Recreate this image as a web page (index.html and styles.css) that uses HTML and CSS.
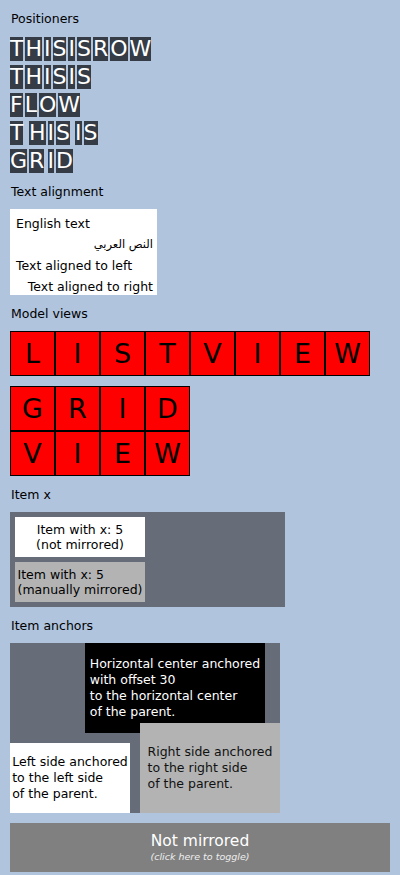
FILE: index.html
```html
<!DOCTYPE html>
<html lang="en">
<head>
<meta charset="utf-8">
<title>Layout direction</title>
<link rel="stylesheet" href="styles.css">
</head>
<body>
<main class="page">
  <div class="label first">Positioners</div>
  <section class="positioners">
    <div class="prow">
      <span class="ch">T</span><span class="ch">H</span><span class="ch">I</span><span class="ch">S</span><span class="ch">I</span><span class="ch">S</span><span class="ch">R</span><span class="ch">O</span><span class="ch">W</span>
    </div>
    <div class="pflow">
      <span class="ch">T</span><span class="ch">H</span><span class="ch">I</span><span class="ch">S</span><span class="ch">I</span><span class="ch">S</span><span class="ch">F</span><span class="ch">L</span><span class="ch">O</span><span class="ch">W</span>
    </div>
    <div class="pgrid">
      <span class="ch">T</span><span class="ch">H</span><span class="ch">I</span><span class="ch">S</span><span class="ch">I</span><span class="ch">S</span><span class="ch">G</span><span class="ch">R</span><span class="ch">I</span><span class="ch">D</span>
    </div>
  </section>

  <div class="label">Text alignment</div>
  <section class="textalign">
    <div class="ta-line">English text</div>
    <div class="ta-line ta-arabic" dir="rtl">النص العربي</div>
    <div class="ta-line">Text aligned to left</div>
    <div class="ta-line ta-right">Text aligned to right</div>
  </section>

  <div class="label">Model views</div>
  <section class="listview">
    <div class="cell">L</div><div class="cell">I</div><div class="cell">S</div><div class="cell">T</div><div class="cell">V</div><div class="cell">I</div><div class="cell">E</div><div class="cell">W</div>
  </section>
  <section class="gridview">
    <div class="cell">G</div><div class="cell">R</div><div class="cell">I</div><div class="cell">D</div><div class="cell">V</div><div class="cell">I</div><div class="cell">E</div><div class="cell">W</div>
  </section>

  <div class="label">Item x</div>
  <section class="itemx">
    <div class="ix ix-plain"><div>Item with x: 5<br>(not mirrored)</div></div>
    <div class="ix ix-mirror"><div>Item with x: 5<br>(manually mirrored)</div></div>
  </section>

  <div class="label">Item anchors</div>
  <section class="anchors">
    <div class="anc anc-center"><div>Horizontal center anchored<br>with offset 30<br>to the horizontal center<br>of the parent.</div></div>
    <div class="anc anc-left"><div>Left side anchored<br>to the left side<br>of the parent.</div></div>
    <div class="anc anc-right"><div>Right side anchored<br>to the right side<br>of the parent.</div></div>
  </section>

  <button class="toggle" type="button">
    <span class="toggle-title">Not mirrored</span>
    <span class="toggle-hint">(click here to toggle)</span>
  </button>
</main>
</body>
</html>
```
FILE: styles.css
```css
html, body {
  margin: 0;
  padding: 0;
}
body {
  background: #b0c4de;
  font-family: "DejaVu Sans", "Noto Sans", sans-serif;
  font-size: 12.5px;
  color: #000;
  width: 400px;
  height: 875px;
  overflow: hidden;
}
.page {
  display: flex;
  flex-direction: column;
  align-items: flex-start;
  padding: 10px 10px 0 10px;
}
.label {
  height: 16px;
  line-height: 16px;
  padding-left: 1px;
  margin-top: 11px;
  margin-bottom: 9px;
}
.label.first {
  margin-top: 1px;
  margin-bottom: 10px;
}

/* Positioners */
.positioners {
  display: flex;
  flex-direction: column;
  gap: 4px;
}
.ch {
  display: block;
  background: #353c46;
  color: #fff;
  font-size: 22px;
  line-height: 24px;
  height: 24px;
  text-align: center;
}
.prow {
  display: flex;
  gap: 2px;
}
.pflow {
  display: flex;
  flex-wrap: wrap;
  column-gap: 2px;
  row-gap: 4px;
  width: 90px;
}
.pgrid {
  display: grid;
  grid-template-columns: repeat(6, auto);
  column-gap: 2px;
  row-gap: 4px;
  justify-items: start;
  justify-content: start;
}

/* Text alignment */
.textalign {
  width: 147px;
  box-sizing: border-box;
  background: #fff;
  padding: 4px 4px 0 6px;
}
.ta-line {
  line-height: 21px;
  height: 21px;
  white-space: nowrap;
}
.ta-line:last-child {
  height: 19px;
}
.ta-arabic {
  font-size: 11.5px;
}
.ta-right {
  text-align: right;
}

/* Model views */
.listview {
  display: flex;
}
.gridview {
  display: grid;
  grid-template-columns: repeat(4, 45px);
  margin-top: 10px;
}
.cell {
  width: 45px;
  height: 45px;
  box-sizing: border-box;
  border: 1px solid #000;
  background: #ff0000;
  color: #000;
  font-size: 27px;
  display: flex;
  align-items: center;
  justify-content: center;
}

/* Item x */
.itemx {
  width: 275px;
  box-sizing: border-box;
  background: #666d79;
  padding: 5px;
  display: flex;
  flex-direction: column;
  gap: 5px;
}
.ix {
  width: 130px;
  height: 40px;
  display: flex;
  align-items: center;
  justify-content: center;
  line-height: 15px;
  white-space: nowrap;
}
.ix-plain {
  background: #fff;
  text-align: center;
}
.ix-mirror {
  background: #b3b3b3;
  text-align: left;
}

/* Item anchors */
.anchors {
  width: 270px;
  height: 170px;
  background: #666d79;
  display: grid;
  grid-template-columns: 100%;
  grid-template-rows: 100%;
}
.anc {
  grid-area: 1 / 1;
  display: flex;
  align-items: center;
  justify-content: center;
  line-height: 16px;
  white-space: nowrap;
  text-align: left;
}
.anc-center {
  width: 180px;
  height: 90px;
  background: #000;
  color: #fff;
  justify-self: center;
  align-self: start;
  margin-left: 60px;
}
.anc-left {
  width: 120px;
  height: 70px;
  background: #fff;
  justify-self: start;
  align-self: end;
}
.anc-right {
  width: 140px;
  height: 90px;
  background: #b3b3b3;
  color: #111;
  justify-self: end;
  align-self: end;
}

/* Toggle button */
.toggle {
  margin-top: 10px;
  width: 380px;
  height: 49px;
  border: 0;
  padding: 0;
  background: #808080;
  color: #fff;
  display: flex;
  flex-direction: column;
  align-items: center;
  justify-content: center;
  font-family: "DejaVu Sans", "Noto Sans", sans-serif;
  cursor: pointer;
}
.toggle-title {
  font-size: 15.5px;
  line-height: 18px;
}
.toggle-hint {
  font-size: 9.5px;
  line-height: 13px;
  font-style: italic;
  color: #eee;
}
```
